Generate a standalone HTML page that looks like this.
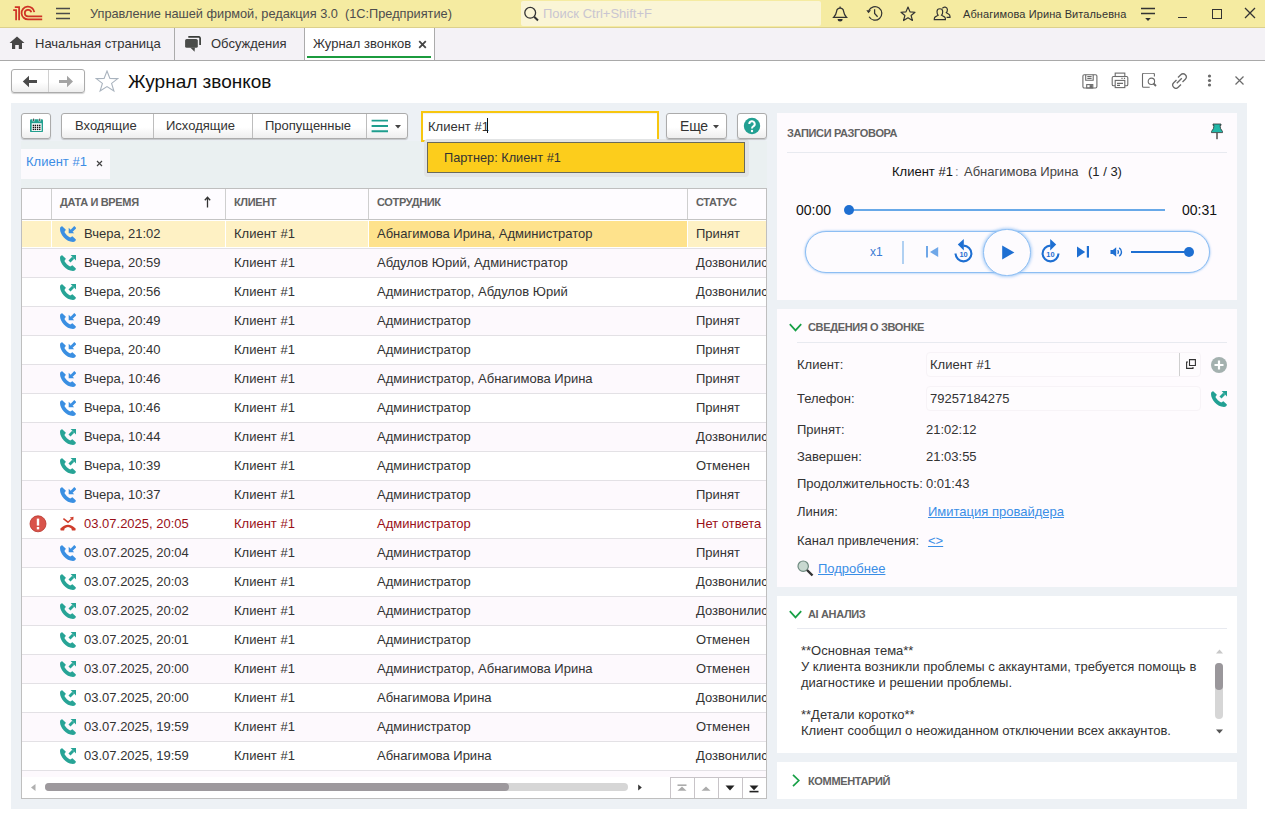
<!DOCTYPE html>
<html><head><meta charset="utf-8">
<style>
*{box-sizing:border-box;margin:0;padding:0}
html,body{width:1265px;height:820px;overflow:hidden;background:#fff;font-family:"Liberation Sans",sans-serif;color:#333;font-size:13px}
.a{position:absolute}
.t{position:absolute;white-space:nowrap;line-height:16px}
#top{left:0;top:0;width:1265px;height:28px;background:#F5EBA1;border-bottom:1px solid #DCD08C}
#tabs{left:0;top:28px;width:1265px;height:33px;background:#F4F2F6;border-bottom:1px solid #A9A9A9}
#gray{left:11px;top:103px;width:1236px;height:706px;background:#EDF1F5}
.btn{position:absolute;background:linear-gradient(#fff 55%,#EEEEEE);border:1px solid #ABABAB;border-radius:3px;box-shadow:0 1px 1px rgba(0,0,0,.18)}
.card{position:absolute;left:777px;width:460px;background:#FEFBFE}
.hd{font-size:11px;font-weight:bold;color:#626262;letter-spacing:-0.35px}
.ic{position:absolute}
</style></head><body>

<div id="top" class="a"></div>
<svg class="a" style="left:0;top:0" width="50" height="28" viewBox="0 0 50 28" fill="none" stroke="#CF3426" stroke-width="1.75"><path d="M13.2 10 H16.1 V20.2"/><path d="M14.8 7 H19.1 V20.2"/><path d="M34.3 12.2 A6.4 6.4 0 1 0 28.2 19.4 H42.2"/><path d="M31.3 12.3 A3.3 3.3 0 1 0 28.2 16.4 H42.2"/></svg>
<svg class="a" style="left:56px;top:7px" width="15" height="13" viewBox="0 0 15 13" stroke="#4A4A4A" stroke-width="1.6"><path d="M0 1.5H14M0 6.5H14M0 11.5H14"/></svg>
<div class="t" style="left:90px;top:6px;font-size:12.75px;color:#4D4D4D">Управление нашей фирмой, редакция 3.0&nbsp; (1С:Предприятие)</div>
<div class="a" style="left:521px;top:1px;width:300px;height:25px;background:#FAF5D6;border-radius:2px"></div>
<svg class="a" style="left:523px;top:6px" width="17" height="16" viewBox="0 0 17 16" fill="none" stroke="#333" stroke-width="1.3"><circle cx="7.2" cy="6.8" r="5.4"/><path d="M11.2 10.8 L15 14.4" stroke-width="2"/></svg>
<div class="t" style="left:543px;top:6px;font-size:13px;color:#C9C5D1">Поиск Ctrl+Shift+F</div>
<svg class="a" style="left:828px;top:2px" width="60" height="24" viewBox="0 0 60 24" fill="none" stroke="#333" stroke-width="1.25"><path d="M12.1 4.4 V6"/><path d="M5.6 15.4 Q8.2 12.6 8.6 9.4 Q9 6.2 12.1 6.2 Q15.2 6.2 15.6 9.4 Q16 12.6 18.6 15.4 Z"/><path d="M9.6 17 A2.5 2.5 0 0 0 14.6 17 Z" fill="#333" stroke="none"/><path d="M40.84 8.53 A6.8 6.8 0 1 1 41.1 14.8"/><path d="M38.3 8.2 H43 L40.5 11.2 Z" fill="#333" stroke="none"/><path d="M46.6 7.3 V11.5 L49.6 14.7"/></svg>
<svg class="a" style="left:899px;top:5px" width="18" height="18" viewBox="0 0 18 18" fill="none" stroke="#333" stroke-width="1.2" stroke-linejoin="round"><path d="M9.00 2.09 L11.02 6.88 L15.99 7.24 L12.13 10.56 L13.42 15.52 L9.00 12.76 L4.58 15.52 L5.87 10.56 L2.01 7.24 L6.98 6.88 Z"/></svg>
<svg class="a" style="left:933px;top:4px" width="18" height="18" viewBox="0 0 18 18" fill="none" stroke="#333" stroke-width="1.2"><path d="M1.3 15.6 V14.8 Q1.3 13.2 3 12.4 L5.1 11.2 Q4 10.2 4 7.6 A2.85 2.85 0 0 1 9.7 7.6 Q9.7 10.2 8.6 11.2 L10.7 12.4 Q12.4 13.2 12.4 14.8 V15.6 Z"/><path d="M9.4 4.4 A2.7 2.7 0 0 1 14.4 5.4 Q14.4 7.6 13.3 8.7 L15.5 10 Q17 10.8 17 12.6 V13.4 H13.6"/></svg>
<div class="t" style="left:963px;top:6px;font-size:11px;letter-spacing:0.1px;color:#333">Абнагимова Ирина Витальевна</div>
<svg class="a" style="left:1140px;top:7px" width="16" height="15" viewBox="0 0 16 15" stroke="#333" stroke-width="1.3"><path d="M1 1.5H15M1 6.5H15"/><path d="M5.2 11 H10.8 L8 14 Z" fill="#333" stroke="none"/></svg>
<div class="a" style="left:1178px;top:17px;width:9px;height:1.3px;background:#333"></div>
<div class="a" style="left:1212px;top:9px;width:9.5px;height:9.5px;border:1.3px solid #333"></div>
<svg class="a" style="left:1244px;top:7px" width="12" height="12" viewBox="0 0 12 12" stroke="#333" stroke-width="1.3"><path d="M1 1L11 11M11 1L1 11"/></svg>
<div id="tabs" class="a"></div>
<svg class="a" style="left:9px;top:36px" width="16" height="14" viewBox="0 0 16 14" fill="#464646"><path d="M8 0.5 L15.5 7 H13 V13 H9.8 V9 H6.2 V13 H3 V7 H0.5 Z"/></svg>
<div class="t" style="left:35px;top:36px;font-size:13px;color:#333">Начальная страница</div>
<div class="a" style="left:174px;top:28px;width:1px;height:32px;background:#ABABAB"></div>
<svg class="a" style="left:180px;top:32px" width="28" height="24" viewBox="0 0 28 24"><path d="M8.3 4.8 H19 A1.4 1.4 0 0 1 20.1 6 V13" fill="none" stroke="#3A3D3A" stroke-width="1.7"/><rect x="5.1" y="7" width="12.7" height="8.8" rx="1.6" fill="#4A4C4A"/><path d="M10.2 15.5 L14.6 19.8 L14.9 15.5 Z" fill="#4A4C4A"/></svg>
<div class="t" style="left:211px;top:36px;font-size:13px;color:#333">Обсуждения</div>
<div class="a" style="left:304px;top:28px;width:1px;height:32px;background:#ABABAB"></div>
<div class="a" style="left:305px;top:28px;width:129px;height:32px;background:#FFFFFF"></div>
<div class="t" style="left:313px;top:36px;font-size:13px;color:#333">Журнал звонков</div>
<svg class="a" style="left:418px;top:40px" width="9" height="9" viewBox="0 0 9 9" stroke="#444" stroke-width="1.8"><path d="M1.2 1.2L7.8 7.8M7.8 1.2L1.2 7.8"/></svg>
<div class="a" style="left:307px;top:56px;width:124px;height:2px;background:#1B9B3E"></div>
<div class="a" style="left:434px;top:28px;width:1px;height:32px;background:#ABABAB"></div>
<div class="btn" style="left:11px;top:69px;width:74px;height:24px"></div>
<div class="a" style="left:48px;top:70px;width:1px;height:22px;background:#D0D0D0"></div>
<svg class="a" style="left:22px;top:75px" width="16" height="13" viewBox="0 0 16 13" fill="#4A4A4A"><path d="M0.8 6.5 L7 0.8 V5.1 H15 V7.9 H7 V12.2 Z"/></svg>
<svg class="a" style="left:58px;top:75px" width="16" height="13" viewBox="0 0 16 13" fill="#A3A3A3"><path d="M15 6.5 L9 0.8 V5.1 H1 V7.9 H9 V12.2 Z"/></svg>
<svg class="a" style="left:95px;top:70px" width="24" height="23" viewBox="0 0 24 23" fill="none" stroke="#A9B3BE" stroke-width="1.1"><path d="M12 1 L14.9 8.4 L22.8 8.6 L16.6 13.4 L18.9 21 L12 16.6 L5.1 21 L7.4 13.4 L1.2 8.6 L9.1 8.4 Z"/></svg>
<div class="t" style="left:128px;top:70px;font-size:19px;line-height:23px;color:#111">Журнал звонков</div>
<svg class="a" style="left:1082px;top:74px" width="16" height="15" viewBox="0 0 16 15" fill="none" stroke="#6B6B6B" stroke-width="1.1"><rect x="0.9" y="0.7" width="14" height="13.3" rx="1.4"/><path d="M3.7 0.7 V6.2 H11.2 V0.7"/><path d="M5.3 2.6 H9.6 M5.3 4.5 H9.6"/><rect x="4.7" y="10.6" width="6.1" height="3.4"/><rect x="7.6" y="11.1" width="2.7" height="2.9" fill="#6B6B6B" stroke="none"/></svg>
<svg class="a" style="left:1111px;top:72px" width="18" height="17" viewBox="0 0 18 17" fill="none" stroke="#6B6B6B" stroke-width="1.1"><rect x="4.2" y="1.1" width="9.6" height="3.4"/><path d="M4 13.8 H2.5 A1.3 1.3 0 0 1 1.2 12.5 V5.8 A1.3 1.3 0 0 1 2.5 4.5 H15.5 A1.3 1.3 0 0 1 16.8 5.8 V12.5 A1.3 1.3 0 0 1 15.5 13.8 H14"/><rect x="4.2" y="8.4" width="9.6" height="7.2"/><path d="M6 11.4 H12 M6 13.4 H9 M10.4 6.4 H11.6 M12.9 6.4 H14.1"/></svg>
<svg class="a" style="left:1141px;top:73px" width="17" height="16" viewBox="0 0 17 16" fill="none" stroke="#6B6B6B" stroke-width="1.1"><path d="M8.7 14.3 H2.5 A1 1 0 0 1 1.5 13.3 V1.3 A1 1 0 0 1 2.5 0.3 H12.4 A1 1 0 0 1 13.4 1.3 V3.6"/><circle cx="10.4" cy="8.3" r="3.2"/><path d="M12.5 10.5 L15 13" stroke-width="1.8"/></svg>
<svg class="a" style="left:1171px;top:73px" width="17" height="16" viewBox="0 0 17 16" fill="none" stroke="#6A6A6A" stroke-width="1.3"><path d="M7 4.5 L9.8 1.7 A2.6 2.6 0 0 1 14.3 6.2 L11.5 9"/><path d="M5.5 7 L2.7 9.8 A2.6 2.6 0 0 0 7.2 14.3 L10 11.5"/><path d="M5.8 10.2 L10.8 5.2"/></svg>
<svg class="a" style="left:1207px;top:74px" width="5" height="13" viewBox="0 0 5 13" fill="#6A6A6A"><circle cx="2.5" cy="2" r="1.6"/><circle cx="2.5" cy="6.5" r="1.6"/><circle cx="2.5" cy="11" r="1.6"/></svg>
<svg class="a" style="left:1235px;top:76px" width="9" height="9" viewBox="0 0 9 9" stroke="#6A6A6A" stroke-width="1.2"><path d="M0.5 0.5L8.5 8.5M8.5 0.5L0.5 8.5"/></svg>
<div id="gray" class="a"></div>
<div class="a" style="left:21px;top:141px;width:746px;height:47px;background:#EAF0F1"></div>
<div class="btn" style="left:21px;top:113px;width:30px;height:26px"></div>
<svg class="a" style="left:29px;top:117px" width="15" height="16" viewBox="0 0 15 16"><rect x="1" y="2.3" width="13" height="12.8" rx="1.2" fill="#23A08F"/><rect x="2.7" y="6.2" width="9.9" height="7.8" fill="#fff"/><rect x="3.5" y="1.4" width="2" height="3" fill="#fff"/><rect x="9.6" y="1.4" width="2" height="3" fill="#fff"/><rect x="4" y="1.6" width="1.1" height="2.5" fill="#555"/><rect x="10.1" y="1.6" width="1.1" height="2.5" fill="#555"/><rect x="3.70" y="7.70" width="1.4" height="1.4" fill="#111"/><rect x="3.70" y="9.70" width="1.4" height="1.4" fill="#111"/><rect x="3.70" y="11.70" width="1.4" height="1.4" fill="#111"/><rect x="5.70" y="7.70" width="1.4" height="1.4" fill="#111"/><rect x="5.70" y="9.70" width="1.4" height="1.4" fill="#111"/><rect x="5.70" y="11.70" width="1.4" height="1.4" fill="#111"/><rect x="7.90" y="7.70" width="1.4" height="1.4" fill="#111"/><rect x="7.90" y="9.70" width="1.4" height="1.4" fill="#111"/><rect x="7.90" y="11.70" width="1.4" height="1.4" fill="#111"/><rect x="10.05" y="7.70" width="1.4" height="1.4" fill="#111"/><rect x="10.05" y="9.70" width="1.4" height="1.4" fill="#111"/><rect x="10.05" y="11.70" width="1.4" height="1.4" fill="#111"/></svg>
<div class="btn" style="left:61px;top:113px;width:347px;height:26px"></div>
<div class="a" style="left:153px;top:114px;width:1px;height:24px;background:#BDBDBD"></div>
<div class="a" style="left:252px;top:114px;width:1px;height:24px;background:#BDBDBD"></div>
<div class="a" style="left:366px;top:114px;width:1px;height:24px;background:#BDBDBD"></div>
<div class="t" style="left:75px;top:118px;color:#333">Входящие</div>
<div class="t" style="left:166px;top:118px;color:#333">Исходящие</div>
<div class="t" style="left:265px;top:118px;color:#333">Пропущенные</div>
<svg class="a" style="left:371px;top:119px" width="18" height="14" viewBox="0 0 18 14" stroke="#1F9E8E" stroke-width="1.9"><path d="M0.6 1.6H17M0.6 7H17M0.6 12.2H17"/></svg>
<svg class="a" style="left:395px;top:125px" width="6" height="4" viewBox="0 0 6 4" fill="#444"><path d="M0 0H6L3 3.5Z"/></svg>
<div class="a" style="left:421px;top:111px;width:238px;height:31px;border:2px solid #F7C60F;background:#fff;box-shadow:inset 0 1px 1px rgba(0,0,0,.06)"></div>
<div class="t" style="left:428px;top:119px;color:#333">Клиент #1</div>
<div class="a" style="left:487px;top:118px;width:1px;height:15px;background:#111"></div>
<div class="a" style="left:424px;top:139px;width:325px;height:38px;background:#E2E4E5;border-radius:4px;filter:blur(0.6px)"></div>
<div class="a" style="left:427px;top:142px;width:318px;height:31px;background:#FCCD1C;border:1px solid #6A6A5A"></div>
<div class="t" style="left:444px;top:150px;font-size:12.75px;color:#333">Партнер: Клиент #1</div>
<div class="btn" style="left:666px;top:113px;width:61px;height:26px"></div>
<div class="t" style="left:680px;top:118px;font-size:14px;color:#333;letter-spacing:-0.2px">Еще</div>
<svg class="a" style="left:713px;top:125px" width="6" height="4" viewBox="0 0 6 4" fill="#444"><path d="M0 0H6L3 3.5Z"/></svg>
<div class="btn" style="left:737px;top:113px;width:30px;height:26px"></div>
<svg class="a" style="left:743px;top:117px" width="18" height="18" viewBox="0 0 18 18"><circle cx="9" cy="9" r="8.2" fill="#22A092"/><path d="M6.3 7 A2.7 2.7 0 1 1 10.2 9.4 Q9 10 9 11.4" fill="none" stroke="#fff" stroke-width="2"/><circle cx="9" cy="14" r="1.2" fill="#fff"/></svg>
<div class="a" style="left:21px;top:149px;width:89px;height:30px;background:#FCFAFD"></div>
<div class="t" style="left:26px;top:154px;color:#3C8DE5">Клиент #1</div>
<svg class="a" style="left:96px;top:160px" width="7" height="7" viewBox="0 0 7 7" stroke="#444" stroke-width="1.2"><path d="M1 1L6 6M6 1L1 6"/></svg>
<div class="a" style="left:21px;top:188px;width:746px;height:611px;border:1px solid #BFBFBF;background:#fff;overflow:hidden">
<div class="a" style="left:0;top:0;width:744px;height:31px;background:#FEFCFF;border-bottom:1px solid #C4C4C4"></div>
<div class="a" style="left:29px;top:0;width:1px;height:30px;background:#CFCFCF"></div>
<div class="a" style="left:203px;top:0;width:1px;height:30px;background:#CFCFCF"></div>
<div class="a" style="left:346px;top:0;width:1px;height:30px;background:#CFCFCF"></div>
<div class="a" style="left:665px;top:0;width:1px;height:30px;background:#CFCFCF"></div>
<div class="t hd" style="left:38px;top:5px">ДАТА И ВРЕМЯ</div>
<svg class="a" style="left:182px;top:7px" width="7" height="12" viewBox="0 0 7 12" fill="none" stroke="#333" stroke-width="1.3"><path d="M3.5 11.5V1.5M0.8 4.2L3.5 1.2L6.2 4.2"/></svg>
<div class="t hd" style="left:212px;top:5px">КЛИЕНТ</div>
<div class="t hd" style="left:355px;top:5px">СОТРУДНИК</div>
<div class="t hd" style="left:674px;top:5px">СТАТУС</div>
<div class="a" style="left:0;top:31px;width:744px;height:28px;background:#FFFFFF"></div>
<div class="a" style="left:0;top:32px;width:744px;height:26px;background:#FEF1C4"></div>
<div class="a" style="left:0;top:59px;width:744px;height:1px;background:#E3E1E5"></div>
<div class="a" style="left:347px;top:32px;width:318px;height:26px;background:#FEE28C"></div>
<div class="a" style="left:29px;top:32px;width:1px;height:26px;background:#FFFFFF"></div>
<div class="a" style="left:203px;top:32px;width:1px;height:26px;background:#FFFFFF"></div>
<div class="a" style="left:346px;top:32px;width:1px;height:26px;background:#FFFFFF"></div>
<div class="a" style="left:665px;top:32px;width:1px;height:26px;background:#FFFFFF"></div>
<svg class="a" style="left:38px;top:37px" width="16" height="16" viewBox="0 0 16 16" fill="#3A8FE2" stroke="#3A8FE2" stroke-width="0"><path d="M2.2 0.2 C1 0.2 0 1.2 0 3 C0 8.5 6 15.9 13 15.9 C14.6 15.9 15.9 15 15.9 13.6 L12.4 10.2 L10.2 11.6 C8 10.6 5.5 8 4.4 6 L5.9 3.8 Z"/><path d="M15.3 1.1 L11.4 5" stroke-width="2.8" fill="none"/><path d="M8.7 1.8 L8.7 7.3 L14.2 7.3 Z"/></svg>
<div class="t" style="left:62px;top:37px;color:#333">Вчера, 21:02</div>
<div class="t" style="left:212px;top:37px;color:#333">Клиент #1</div>
<div class="t" style="left:355px;top:37px;color:#333">Абнагимова Ирина, Администратор</div>
<div class="t" style="left:674px;top:37px;color:#333">Принят</div>
<div class="a" style="left:0;top:60px;width:744px;height:28px;background:#FDF9FD"></div>
<div class="a" style="left:0;top:88px;width:744px;height:1px;background:#E3E1E5"></div>
<svg class="a" style="left:38px;top:66px" width="16" height="16" viewBox="0 0 16 16" fill="#27A496" stroke="#27A496" stroke-width="0"><path d="M2.2 0.2 C1 0.2 0 1.2 0 3 C0 8.5 6 15.9 13 15.9 C14.6 15.9 15.9 15 15.9 13.6 L12.4 10.2 L10.2 11.6 C8 10.6 5.5 8 4.4 6 L5.9 3.8 Z"/><path d="M9.5 6.5 L13.2 2.8" stroke-width="2.9" fill="none"/><path d="M10.5 -0.1 L16.1 -0.1 L16.1 5.5 Z"/></svg>
<div class="t" style="left:62px;top:66px;color:#333">Вчера, 20:59</div>
<div class="t" style="left:212px;top:66px;color:#333">Клиент #1</div>
<div class="t" style="left:355px;top:66px;color:#333">Абдулов Юрий, Администратор</div>
<div class="t" style="left:674px;top:66px;color:#333">Дозвонились</div>
<div class="a" style="left:0;top:89px;width:744px;height:28px;background:#FFFFFF"></div>
<div class="a" style="left:0;top:117px;width:744px;height:1px;background:#E3E1E5"></div>
<svg class="a" style="left:38px;top:95px" width="16" height="16" viewBox="0 0 16 16" fill="#27A496" stroke="#27A496" stroke-width="0"><path d="M2.2 0.2 C1 0.2 0 1.2 0 3 C0 8.5 6 15.9 13 15.9 C14.6 15.9 15.9 15 15.9 13.6 L12.4 10.2 L10.2 11.6 C8 10.6 5.5 8 4.4 6 L5.9 3.8 Z"/><path d="M9.5 6.5 L13.2 2.8" stroke-width="2.9" fill="none"/><path d="M10.5 -0.1 L16.1 -0.1 L16.1 5.5 Z"/></svg>
<div class="t" style="left:62px;top:95px;color:#333">Вчера, 20:56</div>
<div class="t" style="left:212px;top:95px;color:#333">Клиент #1</div>
<div class="t" style="left:355px;top:95px;color:#333">Администратор, Абдулов Юрий</div>
<div class="t" style="left:674px;top:95px;color:#333">Дозвонились</div>
<div class="a" style="left:0;top:118px;width:744px;height:28px;background:#FDF9FD"></div>
<div class="a" style="left:0;top:146px;width:744px;height:1px;background:#E3E1E5"></div>
<svg class="a" style="left:38px;top:124px" width="16" height="16" viewBox="0 0 16 16" fill="#3A8FE2" stroke="#3A8FE2" stroke-width="0"><path d="M2.2 0.2 C1 0.2 0 1.2 0 3 C0 8.5 6 15.9 13 15.9 C14.6 15.9 15.9 15 15.9 13.6 L12.4 10.2 L10.2 11.6 C8 10.6 5.5 8 4.4 6 L5.9 3.8 Z"/><path d="M15.3 1.1 L11.4 5" stroke-width="2.8" fill="none"/><path d="M8.7 1.8 L8.7 7.3 L14.2 7.3 Z"/></svg>
<div class="t" style="left:62px;top:124px;color:#333">Вчера, 20:49</div>
<div class="t" style="left:212px;top:124px;color:#333">Клиент #1</div>
<div class="t" style="left:355px;top:124px;color:#333">Администратор</div>
<div class="t" style="left:674px;top:124px;color:#333">Принят</div>
<div class="a" style="left:0;top:147px;width:744px;height:28px;background:#FFFFFF"></div>
<div class="a" style="left:0;top:175px;width:744px;height:1px;background:#E3E1E5"></div>
<svg class="a" style="left:38px;top:153px" width="16" height="16" viewBox="0 0 16 16" fill="#3A8FE2" stroke="#3A8FE2" stroke-width="0"><path d="M2.2 0.2 C1 0.2 0 1.2 0 3 C0 8.5 6 15.9 13 15.9 C14.6 15.9 15.9 15 15.9 13.6 L12.4 10.2 L10.2 11.6 C8 10.6 5.5 8 4.4 6 L5.9 3.8 Z"/><path d="M15.3 1.1 L11.4 5" stroke-width="2.8" fill="none"/><path d="M8.7 1.8 L8.7 7.3 L14.2 7.3 Z"/></svg>
<div class="t" style="left:62px;top:153px;color:#333">Вчера, 20:40</div>
<div class="t" style="left:212px;top:153px;color:#333">Клиент #1</div>
<div class="t" style="left:355px;top:153px;color:#333">Администратор</div>
<div class="t" style="left:674px;top:153px;color:#333">Принят</div>
<div class="a" style="left:0;top:176px;width:744px;height:28px;background:#FDF9FD"></div>
<div class="a" style="left:0;top:204px;width:744px;height:1px;background:#E3E1E5"></div>
<svg class="a" style="left:38px;top:182px" width="16" height="16" viewBox="0 0 16 16" fill="#3A8FE2" stroke="#3A8FE2" stroke-width="0"><path d="M2.2 0.2 C1 0.2 0 1.2 0 3 C0 8.5 6 15.9 13 15.9 C14.6 15.9 15.9 15 15.9 13.6 L12.4 10.2 L10.2 11.6 C8 10.6 5.5 8 4.4 6 L5.9 3.8 Z"/><path d="M15.3 1.1 L11.4 5" stroke-width="2.8" fill="none"/><path d="M8.7 1.8 L8.7 7.3 L14.2 7.3 Z"/></svg>
<div class="t" style="left:62px;top:182px;color:#333">Вчера, 10:46</div>
<div class="t" style="left:212px;top:182px;color:#333">Клиент #1</div>
<div class="t" style="left:355px;top:182px;color:#333">Администратор, Абнагимова Ирина</div>
<div class="t" style="left:674px;top:182px;color:#333">Принят</div>
<div class="a" style="left:0;top:205px;width:744px;height:28px;background:#FFFFFF"></div>
<div class="a" style="left:0;top:233px;width:744px;height:1px;background:#E3E1E5"></div>
<svg class="a" style="left:38px;top:211px" width="16" height="16" viewBox="0 0 16 16" fill="#3A8FE2" stroke="#3A8FE2" stroke-width="0"><path d="M2.2 0.2 C1 0.2 0 1.2 0 3 C0 8.5 6 15.9 13 15.9 C14.6 15.9 15.9 15 15.9 13.6 L12.4 10.2 L10.2 11.6 C8 10.6 5.5 8 4.4 6 L5.9 3.8 Z"/><path d="M15.3 1.1 L11.4 5" stroke-width="2.8" fill="none"/><path d="M8.7 1.8 L8.7 7.3 L14.2 7.3 Z"/></svg>
<div class="t" style="left:62px;top:211px;color:#333">Вчера, 10:46</div>
<div class="t" style="left:212px;top:211px;color:#333">Клиент #1</div>
<div class="t" style="left:355px;top:211px;color:#333">Администратор</div>
<div class="t" style="left:674px;top:211px;color:#333">Принят</div>
<div class="a" style="left:0;top:234px;width:744px;height:28px;background:#FDF9FD"></div>
<div class="a" style="left:0;top:262px;width:744px;height:1px;background:#E3E1E5"></div>
<svg class="a" style="left:38px;top:240px" width="16" height="16" viewBox="0 0 16 16" fill="#27A496" stroke="#27A496" stroke-width="0"><path d="M2.2 0.2 C1 0.2 0 1.2 0 3 C0 8.5 6 15.9 13 15.9 C14.6 15.9 15.9 15 15.9 13.6 L12.4 10.2 L10.2 11.6 C8 10.6 5.5 8 4.4 6 L5.9 3.8 Z"/><path d="M9.5 6.5 L13.2 2.8" stroke-width="2.9" fill="none"/><path d="M10.5 -0.1 L16.1 -0.1 L16.1 5.5 Z"/></svg>
<div class="t" style="left:62px;top:240px;color:#333">Вчера, 10:44</div>
<div class="t" style="left:212px;top:240px;color:#333">Клиент #1</div>
<div class="t" style="left:355px;top:240px;color:#333">Администратор</div>
<div class="t" style="left:674px;top:240px;color:#333">Дозвонились</div>
<div class="a" style="left:0;top:263px;width:744px;height:28px;background:#FFFFFF"></div>
<div class="a" style="left:0;top:291px;width:744px;height:1px;background:#E3E1E5"></div>
<svg class="a" style="left:38px;top:269px" width="16" height="16" viewBox="0 0 16 16" fill="#27A496" stroke="#27A496" stroke-width="0"><path d="M2.2 0.2 C1 0.2 0 1.2 0 3 C0 8.5 6 15.9 13 15.9 C14.6 15.9 15.9 15 15.9 13.6 L12.4 10.2 L10.2 11.6 C8 10.6 5.5 8 4.4 6 L5.9 3.8 Z"/><path d="M9.5 6.5 L13.2 2.8" stroke-width="2.9" fill="none"/><path d="M10.5 -0.1 L16.1 -0.1 L16.1 5.5 Z"/></svg>
<div class="t" style="left:62px;top:269px;color:#333">Вчера, 10:39</div>
<div class="t" style="left:212px;top:269px;color:#333">Клиент #1</div>
<div class="t" style="left:355px;top:269px;color:#333">Администратор</div>
<div class="t" style="left:674px;top:269px;color:#333">Отменен</div>
<div class="a" style="left:0;top:292px;width:744px;height:28px;background:#FDF9FD"></div>
<div class="a" style="left:0;top:320px;width:744px;height:1px;background:#E3E1E5"></div>
<svg class="a" style="left:38px;top:298px" width="16" height="16" viewBox="0 0 16 16" fill="#3A8FE2" stroke="#3A8FE2" stroke-width="0"><path d="M2.2 0.2 C1 0.2 0 1.2 0 3 C0 8.5 6 15.9 13 15.9 C14.6 15.9 15.9 15 15.9 13.6 L12.4 10.2 L10.2 11.6 C8 10.6 5.5 8 4.4 6 L5.9 3.8 Z"/><path d="M15.3 1.1 L11.4 5" stroke-width="2.8" fill="none"/><path d="M8.7 1.8 L8.7 7.3 L14.2 7.3 Z"/></svg>
<div class="t" style="left:62px;top:298px;color:#333">Вчера, 10:37</div>
<div class="t" style="left:212px;top:298px;color:#333">Клиент #1</div>
<div class="t" style="left:355px;top:298px;color:#333">Администратор</div>
<div class="t" style="left:674px;top:298px;color:#333">Принят</div>
<div class="a" style="left:0;top:321px;width:744px;height:28px;background:#FFFFFF"></div>
<div class="a" style="left:0;top:349px;width:744px;height:1px;background:#E3E1E5"></div>
<svg class="a" style="left:38px;top:327px" width="16" height="16" viewBox="0 0 16 16" fill="#CF3D2C" stroke="#CF3D2C" stroke-width="0"><path d="M0.2 12.8 Q8 4.8 15.8 12.8 L15.3 14.6 L11.9 14.6 L11.4 12.6 Q8 9.6 4.6 12.6 L4.1 14.6 L0.7 14.6 Z"/><path d="M3.4 2.6 L8 6.2 L11.6 3" stroke-width="1.5" fill="none"/><path d="M9.8 1.4 L13.6 0.8 L13.2 4.6 Z"/></svg>
<div class="t" style="left:62px;top:327px;color:#9A1018">03.07.2025, 20:05</div>
<div class="t" style="left:212px;top:327px;color:#9A1018">Клиент #1</div>
<div class="t" style="left:355px;top:327px;color:#9A1018">Администратор</div>
<div class="t" style="left:674px;top:327px;color:#9A1018">Нет ответа</div>
<svg class="a" style="left:7px;top:326px" width="18" height="18" viewBox="0 0 18 18"><circle cx="9" cy="8.8" r="8" fill="#D9534A" stroke="#B8352C" stroke-width="0.8"/><rect x="7.8" y="3.6" width="2.4" height="7" fill="#fff"/><rect x="7.8" y="12" width="2.4" height="2.4" fill="#fff"/></svg>
<div class="a" style="left:0;top:350px;width:744px;height:28px;background:#FDF9FD"></div>
<div class="a" style="left:0;top:378px;width:744px;height:1px;background:#E3E1E5"></div>
<svg class="a" style="left:38px;top:356px" width="16" height="16" viewBox="0 0 16 16" fill="#3A8FE2" stroke="#3A8FE2" stroke-width="0"><path d="M2.2 0.2 C1 0.2 0 1.2 0 3 C0 8.5 6 15.9 13 15.9 C14.6 15.9 15.9 15 15.9 13.6 L12.4 10.2 L10.2 11.6 C8 10.6 5.5 8 4.4 6 L5.9 3.8 Z"/><path d="M15.3 1.1 L11.4 5" stroke-width="2.8" fill="none"/><path d="M8.7 1.8 L8.7 7.3 L14.2 7.3 Z"/></svg>
<div class="t" style="left:62px;top:356px;color:#333">03.07.2025, 20:04</div>
<div class="t" style="left:212px;top:356px;color:#333">Клиент #1</div>
<div class="t" style="left:355px;top:356px;color:#333">Администратор</div>
<div class="t" style="left:674px;top:356px;color:#333">Принят</div>
<div class="a" style="left:0;top:379px;width:744px;height:28px;background:#FFFFFF"></div>
<div class="a" style="left:0;top:407px;width:744px;height:1px;background:#E3E1E5"></div>
<svg class="a" style="left:38px;top:385px" width="16" height="16" viewBox="0 0 16 16" fill="#27A496" stroke="#27A496" stroke-width="0"><path d="M2.2 0.2 C1 0.2 0 1.2 0 3 C0 8.5 6 15.9 13 15.9 C14.6 15.9 15.9 15 15.9 13.6 L12.4 10.2 L10.2 11.6 C8 10.6 5.5 8 4.4 6 L5.9 3.8 Z"/><path d="M9.5 6.5 L13.2 2.8" stroke-width="2.9" fill="none"/><path d="M10.5 -0.1 L16.1 -0.1 L16.1 5.5 Z"/></svg>
<div class="t" style="left:62px;top:385px;color:#333">03.07.2025, 20:03</div>
<div class="t" style="left:212px;top:385px;color:#333">Клиент #1</div>
<div class="t" style="left:355px;top:385px;color:#333">Администратор</div>
<div class="t" style="left:674px;top:385px;color:#333">Дозвонились</div>
<div class="a" style="left:0;top:408px;width:744px;height:28px;background:#FDF9FD"></div>
<div class="a" style="left:0;top:436px;width:744px;height:1px;background:#E3E1E5"></div>
<svg class="a" style="left:38px;top:414px" width="16" height="16" viewBox="0 0 16 16" fill="#27A496" stroke="#27A496" stroke-width="0"><path d="M2.2 0.2 C1 0.2 0 1.2 0 3 C0 8.5 6 15.9 13 15.9 C14.6 15.9 15.9 15 15.9 13.6 L12.4 10.2 L10.2 11.6 C8 10.6 5.5 8 4.4 6 L5.9 3.8 Z"/><path d="M9.5 6.5 L13.2 2.8" stroke-width="2.9" fill="none"/><path d="M10.5 -0.1 L16.1 -0.1 L16.1 5.5 Z"/></svg>
<div class="t" style="left:62px;top:414px;color:#333">03.07.2025, 20:02</div>
<div class="t" style="left:212px;top:414px;color:#333">Клиент #1</div>
<div class="t" style="left:355px;top:414px;color:#333">Администратор</div>
<div class="t" style="left:674px;top:414px;color:#333">Дозвонились</div>
<div class="a" style="left:0;top:437px;width:744px;height:28px;background:#FFFFFF"></div>
<div class="a" style="left:0;top:465px;width:744px;height:1px;background:#E3E1E5"></div>
<svg class="a" style="left:38px;top:443px" width="16" height="16" viewBox="0 0 16 16" fill="#27A496" stroke="#27A496" stroke-width="0"><path d="M2.2 0.2 C1 0.2 0 1.2 0 3 C0 8.5 6 15.9 13 15.9 C14.6 15.9 15.9 15 15.9 13.6 L12.4 10.2 L10.2 11.6 C8 10.6 5.5 8 4.4 6 L5.9 3.8 Z"/><path d="M9.5 6.5 L13.2 2.8" stroke-width="2.9" fill="none"/><path d="M10.5 -0.1 L16.1 -0.1 L16.1 5.5 Z"/></svg>
<div class="t" style="left:62px;top:443px;color:#333">03.07.2025, 20:01</div>
<div class="t" style="left:212px;top:443px;color:#333">Клиент #1</div>
<div class="t" style="left:355px;top:443px;color:#333">Администратор</div>
<div class="t" style="left:674px;top:443px;color:#333">Отменен</div>
<div class="a" style="left:0;top:466px;width:744px;height:28px;background:#FDF9FD"></div>
<div class="a" style="left:0;top:494px;width:744px;height:1px;background:#E3E1E5"></div>
<svg class="a" style="left:38px;top:472px" width="16" height="16" viewBox="0 0 16 16" fill="#27A496" stroke="#27A496" stroke-width="0"><path d="M2.2 0.2 C1 0.2 0 1.2 0 3 C0 8.5 6 15.9 13 15.9 C14.6 15.9 15.9 15 15.9 13.6 L12.4 10.2 L10.2 11.6 C8 10.6 5.5 8 4.4 6 L5.9 3.8 Z"/><path d="M9.5 6.5 L13.2 2.8" stroke-width="2.9" fill="none"/><path d="M10.5 -0.1 L16.1 -0.1 L16.1 5.5 Z"/></svg>
<div class="t" style="left:62px;top:472px;color:#333">03.07.2025, 20:00</div>
<div class="t" style="left:212px;top:472px;color:#333">Клиент #1</div>
<div class="t" style="left:355px;top:472px;color:#333">Администратор, Абнагимова Ирина</div>
<div class="t" style="left:674px;top:472px;color:#333">Отменен</div>
<div class="a" style="left:0;top:495px;width:744px;height:28px;background:#FFFFFF"></div>
<div class="a" style="left:0;top:523px;width:744px;height:1px;background:#E3E1E5"></div>
<svg class="a" style="left:38px;top:501px" width="16" height="16" viewBox="0 0 16 16" fill="#27A496" stroke="#27A496" stroke-width="0"><path d="M2.2 0.2 C1 0.2 0 1.2 0 3 C0 8.5 6 15.9 13 15.9 C14.6 15.9 15.9 15 15.9 13.6 L12.4 10.2 L10.2 11.6 C8 10.6 5.5 8 4.4 6 L5.9 3.8 Z"/><path d="M9.5 6.5 L13.2 2.8" stroke-width="2.9" fill="none"/><path d="M10.5 -0.1 L16.1 -0.1 L16.1 5.5 Z"/></svg>
<div class="t" style="left:62px;top:501px;color:#333">03.07.2025, 20:00</div>
<div class="t" style="left:212px;top:501px;color:#333">Клиент #1</div>
<div class="t" style="left:355px;top:501px;color:#333">Абнагимова Ирина</div>
<div class="t" style="left:674px;top:501px;color:#333">Дозвонились</div>
<div class="a" style="left:0;top:524px;width:744px;height:28px;background:#FDF9FD"></div>
<div class="a" style="left:0;top:552px;width:744px;height:1px;background:#E3E1E5"></div>
<svg class="a" style="left:38px;top:530px" width="16" height="16" viewBox="0 0 16 16" fill="#27A496" stroke="#27A496" stroke-width="0"><path d="M2.2 0.2 C1 0.2 0 1.2 0 3 C0 8.5 6 15.9 13 15.9 C14.6 15.9 15.9 15 15.9 13.6 L12.4 10.2 L10.2 11.6 C8 10.6 5.5 8 4.4 6 L5.9 3.8 Z"/><path d="M9.5 6.5 L13.2 2.8" stroke-width="2.9" fill="none"/><path d="M10.5 -0.1 L16.1 -0.1 L16.1 5.5 Z"/></svg>
<div class="t" style="left:62px;top:530px;color:#333">03.07.2025, 19:59</div>
<div class="t" style="left:212px;top:530px;color:#333">Клиент #1</div>
<div class="t" style="left:355px;top:530px;color:#333">Администратор</div>
<div class="t" style="left:674px;top:530px;color:#333">Отменен</div>
<div class="a" style="left:0;top:553px;width:744px;height:28px;background:#FFFFFF"></div>
<div class="a" style="left:0;top:581px;width:744px;height:1px;background:#E3E1E5"></div>
<svg class="a" style="left:38px;top:559px" width="16" height="16" viewBox="0 0 16 16" fill="#27A496" stroke="#27A496" stroke-width="0"><path d="M2.2 0.2 C1 0.2 0 1.2 0 3 C0 8.5 6 15.9 13 15.9 C14.6 15.9 15.9 15 15.9 13.6 L12.4 10.2 L10.2 11.6 C8 10.6 5.5 8 4.4 6 L5.9 3.8 Z"/><path d="M9.5 6.5 L13.2 2.8" stroke-width="2.9" fill="none"/><path d="M10.5 -0.1 L16.1 -0.1 L16.1 5.5 Z"/></svg>
<div class="t" style="left:62px;top:559px;color:#333">03.07.2025, 19:59</div>
<div class="t" style="left:212px;top:559px;color:#333">Клиент #1</div>
<div class="t" style="left:355px;top:559px;color:#333">Абнагимова Ирина</div>
<div class="t" style="left:674px;top:559px;color:#333">Дозвонились</div>
<div class="a" style="left:0;top:582px;width:744px;height:6px;background:#FDF9FD"></div>
<div class="a" style="left:0;top:588px;width:744px;height:21px;background:#fff"></div>
<svg class="a" style="left:9px;top:595px" width="5" height="7" viewBox="0 0 5 7" fill="#B0B0B0"><path d="M4.5 0V7L0 3.5Z"/></svg>
<div class="a" style="left:23px;top:594px;width:583px;height:8px;border-radius:4px;background:#D6D6D6"></div>
<div class="a" style="left:23px;top:594px;width:464px;height:8px;border-radius:4px;background:#9D999D"></div>
<svg class="a" style="left:616px;top:595px" width="5" height="7" viewBox="0 0 5 7" fill="#333"><path d="M0.2 0.6V6.4L3.8 3.5Z"/></svg>
<div class="a" style="left:648px;top:588px;width:96px;height:21px;border-left:1px solid #C8C4C8;border-top:1px solid #C8C4C8;background:#fff"></div>
<div class="a" style="left:672px;top:588px;width:1px;height:21px;background:#C8C4C8"></div>
<div class="a" style="left:696px;top:588px;width:1px;height:21px;background:#C8C4C8"></div>
<div class="a" style="left:720px;top:588px;width:1px;height:21px;background:#C8C4C8"></div>
<svg class="a" style="left:654px;top:595px" width="12" height="8" viewBox="0 0 12 8" fill="#ABABAB"><rect x="1.5" y="0.4" width="9" height="1.6"/><path d="M1.5 6.8H10.5L6 2.4Z"/></svg>
<svg class="a" style="left:678px;top:597px" width="12" height="6" viewBox="0 0 12 6" fill="#ABABAB"><path d="M1.5 4.8H10.5L6 0.4Z"/></svg>
<svg class="a" style="left:702px;top:596px" width="12" height="7" viewBox="0 0 12 7" fill="#222"><path d="M1.5 0.6H10.5L6 5.6Z"/></svg>
<svg class="a" style="left:726px;top:596px" width="12" height="8" viewBox="0 0 12 8" fill="#222"><path d="M1.5 0.6H10.5L6 5.2Z"/><rect x="1.5" y="5.8" width="9" height="1.6"/></svg>
</div>
<div class="card" style="top:113px;height:187px"></div>
<div class="t hd" style="left:787px;top:125px">ЗАПИСИ РАЗГОВОРА</div>
<svg class="a" style="left:1211px;top:123px" width="12" height="17" viewBox="0 0 12 17"><path d="M2 1H10V2.4H9L9.6 5.6L11.6 8.6V9.6H0.4V8.6L2.4 5.6L3 2.4H2Z" fill="#22B8A8" stroke="#333" stroke-width="0.8"/><rect x="5.3" y="9.8" width="1.4" height="6.4" fill="#444"/></svg>
<div class="a" style="left:787px;top:152px;width:440px;height:1px;background:#E8EAF0"></div>
<div class="t" style="left:892px;top:164px;color:#111">Клиент #1</div>
<div class="t" style="left:955px;top:164px;color:#888">:</div>
<div class="t" style="left:964px;top:164px;color:#444">Абнагимова Ирина</div>
<div class="t" style="left:1088px;top:164px;color:#222">(1 / 3)</div>
<div class="t" style="left:796px;top:202px;font-size:14px;color:#111">00:00</div>
<div class="t" style="left:1182px;top:202px;font-size:14px;color:#111">00:31</div>
<div class="a" style="left:849px;top:209px;width:316px;height:2px;background:#67A8E8"></div>
<div class="a" style="left:844px;top:205px;width:10px;height:10px;border-radius:5px;background:#1F6FD1"></div>
<div class="a" style="left:805px;top:231px;width:405px;height:42px;border-radius:21px;border:1.5px solid #8DBEF3;box-shadow:0 0 2px 0.5px rgba(140,190,245,.7);background:#FDFBFE"></div>
<div class="t" style="left:870px;top:244px;font-size:12px;color:#3A7BD5">x1</div>
<div class="a" style="left:902px;top:241px;width:2px;height:23px;background:#B0D0F2"></div>
<svg class="a" style="left:925px;top:245px" width="14" height="13" viewBox="0 0 14 13" fill="#6FA7E8"><rect x="1" y="1" width="2" height="11.5"/><path d="M13.2 2V12L5 7Z"/></svg>
<svg class="a" style="left:953px;top:238px" width="21" height="26" viewBox="0 0 21 26" fill="none" stroke="#1E6FD2" stroke-width="2.1"><path d="M2.6 15.5 A7.9 7.9 0 1 0 10.5 7.6"/><path d="M4.8 6.6 L10.8 1 V12.4 Z" fill="#1E6FD2" stroke="none"/><text x="10.6" y="18.9" font-size="7.4" font-weight="bold" font-family="Liberation Sans" text-anchor="middle" fill="#1E6FD2" stroke="none">10</text></svg>
<div class="a" style="left:983px;top:229px;width:48px;height:47px;border-radius:24px;border:1.5px solid #8DBEF3;box-shadow:0 0 3px 1px rgba(140,190,245,.7);background:#FDFBFE"></div>
<svg class="a" style="left:1002px;top:245px" width="13" height="15" viewBox="0 0 13 15" fill="#1E6FD2"><path d="M0.2 0.4V14.4L12.4 7.4Z"/></svg>
<svg class="a" style="left:1040px;top:238px" width="21" height="26" viewBox="0 0 21 26" fill="none" stroke="#1E6FD2" stroke-width="2.1"><path d="M18.4 15.5 A7.9 7.9 0 1 1 10.5 7.6"/><path d="M16.2 6.6 L10.2 1 V12.4 Z" fill="#1E6FD2" stroke="none"/><text x="10.4" y="18.9" font-size="7.4" font-weight="bold" font-family="Liberation Sans" text-anchor="middle" fill="#1E6FD2" stroke="none">10</text></svg>
<svg class="a" style="left:1076px;top:245px" width="14" height="13" viewBox="0 0 14 13" fill="#1E6FD2"><path d="M1 1.6V12.4L9.2 7Z"/><rect x="10.8" y="1" width="2.2" height="11.6"/></svg>
<svg class="a" style="left:1110px;top:246px" width="13" height="12" viewBox="0 0 13 12" fill="#1E6FD2"><path d="M0.5 4H2.8L6.2 1.2V10.8L2.8 8H0.5Z"/><path d="M7.6 4.2 A2.4 2.4 0 0 1 7.6 7.8" fill="none" stroke="#1E6FD2" stroke-width="1.4"/><path d="M9.2 1.8 A5 5 0 0 1 9.2 10.2" fill="none" stroke="#1E6FD2" stroke-width="1.4"/></svg>
<div class="a" style="left:1131px;top:251px;width:58px;height:2px;background:#1E6FD2"></div>
<div class="a" style="left:1184px;top:247px;width:10px;height:10px;border-radius:5px;background:#1E6FD2"></div>
<div class="card" style="top:309px;height:278px"></div>
<svg class="a" style="left:789px;top:323px" width="13" height="9" viewBox="0 0 13 9" fill="none" stroke="#17A046" stroke-width="1.7"><path d="M0.8 1.2 L6.5 7.4 L12.2 1.2"/></svg>
<div class="t hd" style="left:808px;top:319px">СВЕДЕНИЯ О ЗВОНКЕ</div>
<div class="a" style="left:797px;top:342px;width:430px;height:1px;background:#E8EAF0"></div>
<div class="t" style="left:797px;top:357px">Клиент:</div>
<div class="a" style="left:926px;top:352px;width:275px;height:25px;background:#FEFCFE;border:1px solid #F7F3F7;border-radius:4px"></div>
<div class="t" style="left:930px;top:357px">Клиент #1</div>
<div class="a" style="left:1179px;top:353px;width:1px;height:23px;background:#CFCFCF"></div>
<svg class="a" style="left:1186px;top:359px" width="10" height="10" viewBox="0 0 10 10" fill="none" stroke="#333" stroke-width="1.1"><path d="M3.5 0.6H9.4V6.5H3.5Z"/><path d="M2 3H0.6V9.4H7V8"/></svg>
<svg class="a" style="left:1210px;top:356px" width="18" height="18" viewBox="0 0 18 18"><circle cx="9" cy="9" r="8" fill="#A4B1AF"/><path d="M9 4.5V13.5M4.5 9H13.5" stroke="#fff" stroke-width="2.2"/></svg>
<div class="t" style="left:797px;top:391px">Телефон:</div>
<div class="a" style="left:926px;top:386px;width:275px;height:25px;background:#FEFCFE;border:1px solid #F7F3F7;border-radius:4px"></div>
<div class="t" style="left:930px;top:391px">79257184275</div>
<svg class="a" style="left:1211px;top:391px" width="16" height="16" viewBox="0 0 16 16" fill="#22A093" stroke="#27A496" stroke-width="0"><path d="M2.2 0.2 C1 0.2 0 1.2 0 3 C0 8.5 6 15.9 13 15.9 C14.6 15.9 15.9 15 15.9 13.6 L12.4 10.2 L10.2 11.6 C8 10.6 5.5 8 4.4 6 L5.9 3.8 Z"/><path d="M9.5 6.5 L13.2 2.8" stroke-width="2.9" fill="none"/><path d="M10.5 -0.1 L16.1 -0.1 L16.1 5.5 Z"/></svg>
<div class="t" style="left:797px;top:422px">Принят:</div>
<div class="t" style="left:926px;top:422px">21:02:12</div>
<div class="t" style="left:797px;top:449px">Завершен:</div>
<div class="t" style="left:926px;top:449px">21:03:55</div>
<div class="t" style="left:797px;top:476px">Продолжительность:</div>
<div class="t" style="left:926px;top:476px">0:01:43</div>
<div class="t" style="left:797px;top:504px">Линия:</div>
<div class="t" style="left:928px;top:504px;color:#3A8EE6;text-decoration:underline">Имитация провайдера</div>
<div class="t" style="left:797px;top:533px">Канал привлечения:</div>
<div class="t" style="left:928px;top:533px;color:#3A8EE6;text-decoration:underline">&lt;&gt;</div>
<svg class="a" style="left:797px;top:560px" width="17" height="17" viewBox="0 0 17 17"><circle cx="6.2" cy="6.2" r="5.2" fill="#C8D8D0" stroke="#6F8A80" stroke-width="1.2"/><path d="M10 10 L15.5 15.5" stroke="#333" stroke-width="2.4"/></svg>
<div class="t" style="left:818px;top:561px;color:#3A8EE6;text-decoration:underline">Подробнее</div>
<div class="card" style="top:596px;height:157px;background:#fff"></div>
<svg class="a" style="left:789px;top:610px" width="13" height="9" viewBox="0 0 13 9" fill="none" stroke="#17A046" stroke-width="1.7"><path d="M0.8 1.2 L6.5 7.4 L12.2 1.2"/></svg>
<div class="t hd" style="left:808px;top:606px">AI АНАЛИЗ</div>
<div class="a" style="left:797px;top:628px;width:430px;height:1px;background:#E8EAF0"></div>
<div class="a" style="left:801px;top:643px;width:400px;line-height:16px;color:#333">**Основная тема**<br>У клиента возникли проблемы с аккаунтами, требуется помощь в диагностике и решении проблемы.<br><br>**Детали коротко**<br>Клиент сообщил о неожиданном отключении всех аккаунтов.</div>
<svg class="a" style="left:1216px;top:649px" width="7" height="5" viewBox="0 0 7 5" fill="#C8C8C8"><path d="M0 4.5H7L3.5 0.5Z"/></svg>
<div class="a" style="left:1215px;top:663px;width:8px;height:56px;border-radius:4px;background:#D6D6D6"></div>
<div class="a" style="left:1215px;top:663px;width:8px;height:27px;border-radius:4px;background:#9A979B"></div>
<svg class="a" style="left:1216px;top:729px" width="7" height="5" viewBox="0 0 7 5" fill="#555"><path d="M0 0.5H7L3.5 4.5Z"/></svg>
<div class="card" style="top:762px;height:37px;background:#fff"></div>
<svg class="a" style="left:792px;top:774px" width="8" height="13" viewBox="0 0 8 13" fill="none" stroke="#17A046" stroke-width="1.7"><path d="M1 0.8 L6.8 6.5 L1 12.2"/></svg>
<div class="t hd" style="left:808px;top:773px">КОММЕНТАРИЙ</div>
</body></html>
